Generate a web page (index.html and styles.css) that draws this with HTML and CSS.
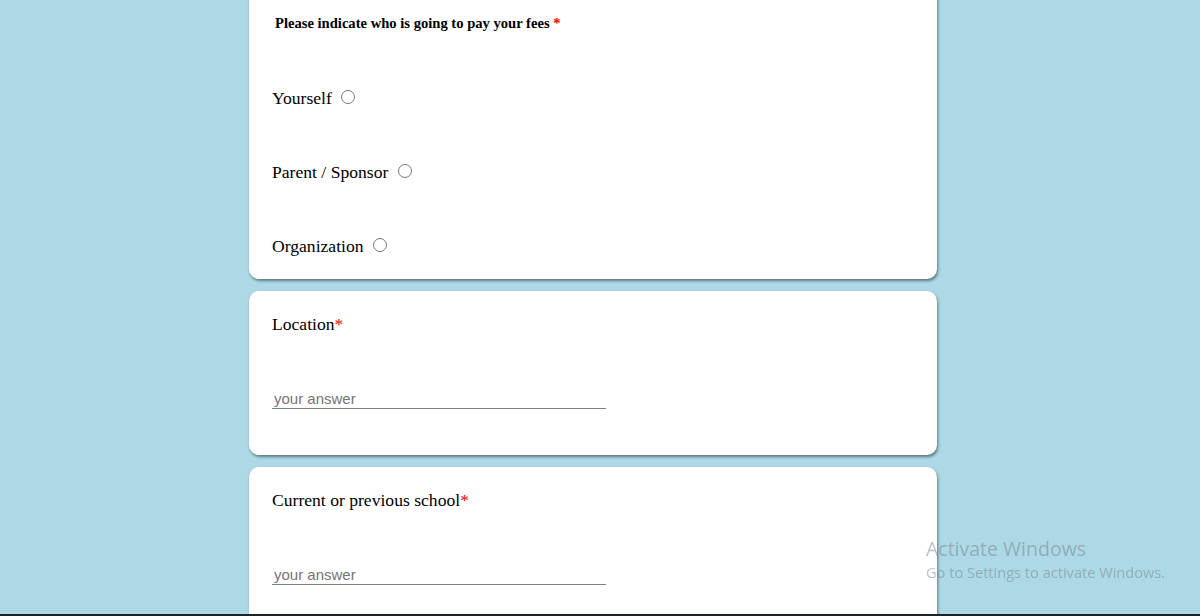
FILE: index.html
```html
<!DOCTYPE html>
<html lang="en">
<head>
<meta charset="utf-8">
<title>Application form</title>
<link rel="stylesheet" href="styles.css">
</head>
<body>
<main class="form">
  <section class="card card-first">
    <h4 class="question">Please indicate who is going to pay your fees <span class="req">*</span></h4>
    <label class="option">Yourself <input type="radio" name="payer"></label>
    <label class="option">Parent / Sponsor <input type="radio" name="payer"></label>
    <label class="option">Organization <input type="radio" name="payer"></label>
  </section>
  <section class="card">
    <div class="label">Location<span class="req">*</span></div>
    <input class="answer" type="text" placeholder="your answer">
  </section>
  <section class="card">
    <div class="label">Current or previous school<span class="req">*</span></div>
    <input class="answer" type="text" placeholder="your answer">
  </section>
</main>
<div class="watermark">
  <div class="wm-title">Activate Windows</div>
  <div class="wm-sub">Go to Settings to activate Windows.</div>
</div>
<div class="taskbar"></div>
</body>
</html>
```
FILE: styles.css
```css
html, body {
  margin: 0;
  padding: 0;
  height: 100%;
  overflow: hidden;
}
body {
  background: #add8e6;
  font-family: "Liberation Serif", "Times New Roman", serif;
  color: #000;
}
.form {
  width: 688px;
  margin: -12px 0 0 249px;
  display: flex;
  flex-direction: column;
  gap: 12px;
}
.card {
  background: #fff;
  border-radius: 10px;
  box-shadow: 1px 2px 3px rgba(0, 0, 0, 0.45);
  padding: 23px 23px 46px;
}
.card-first {
  padding: 27px 23px 23px;
  display: flex;
  flex-direction: column;
  gap: 54px;
}
.question {
  margin: 0 0 2px 3px;
  font-size: 14.6px;
  line-height: 17px;
  font-weight: bold;
}
.req {
  color: #f00;
}
.option {
  display: block;
  height: 20px;
  font-size: 17.6px;
  line-height: 20px;
}
.option input {
  width: 14px;
  height: 14px;
  margin: 0 3px 0 5px;
  vertical-align: baseline;
}
.label {
  font-size: 17.6px;
  line-height: 20px;
  margin-bottom: 55px;
}
.answer {
  display: block;
  width: 334px;
  box-sizing: border-box;
  border: none;
  border-bottom: 1px solid #808080;
  padding: 1px 2px;
  font-family: "Liberation Sans", Arial, sans-serif;
  font-size: 15px;
  line-height: 17px;
  outline: none;
  background: transparent;
}
.answer::placeholder {
  color: #757575;
}
.watermark {
  position: fixed;
  left: 926px;
  top: 535px;
  color: rgba(120, 130, 135, 0.5);
  font-family: "Open Sans", "Noto Sans", sans-serif;
  pointer-events: none;
}
.wm-title {
  font-size: 19.5px;
  line-height: 27px;
}
.wm-sub {
  font-size: 14.6px;
  line-height: 20px;
}
.taskbar {
  position: fixed;
  left: 0;
  right: 0;
  bottom: 0;
  height: 2px;
  background: #1c2429;
}
```
